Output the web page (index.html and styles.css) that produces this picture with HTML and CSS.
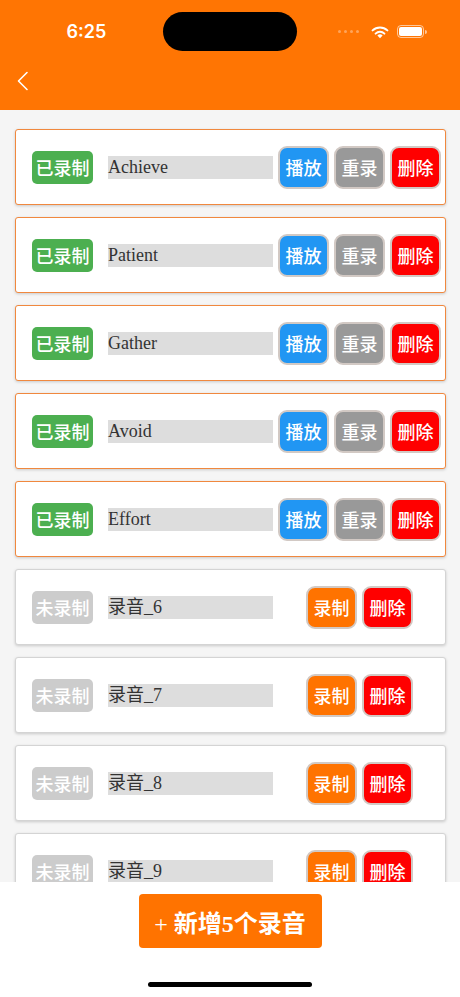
FILE: index.html
```html
<!DOCTYPE html>
<html lang="zh-CN">
<head>
    <meta charset="UTF-8">
    <meta name="viewport" content="width=device-width, initial-scale=1.0">
    <title>录音列表</title>
    <link rel="stylesheet" href="styles.css">
</head>
<body>
    <div class="page">
        <div class="topbar">
            <div class="status">
                <div class="time">6:25</div>
                <div class="island"></div>
                <div class="status-icons">
                    <span class="dots"><i></i><i></i><i></i><i></i></span>
                    <svg class="wifi" width="18" height="14" viewBox="0 0 18 14">
                        <path d="M9 13.2l2.6-2.7a3.8 3.8 0 0 0-5.2 0z" fill="#fff"/>
                        <path d="M4.6 8.6a6.3 6.3 0 0 1 8.8 0" stroke="#fff" stroke-width="2" fill="none" stroke-linecap="round"/>
                        <path d="M1.6 5.4a10.6 10.6 0 0 1 14.8 0" stroke="#fff" stroke-width="2" fill="none" stroke-linecap="round"/>
                    </svg>
                    <span class="battery"><span class="battery-fill"></span></span>
                </div>
            </div>
            <div class="nav">
                <svg class="back" width="14" height="20" viewBox="0 0 14 20">
                    <path d="M11 1.5L2.5 10L11 18.5" stroke="#fff" stroke-width="1.6" fill="none" stroke-linecap="round" stroke-linejoin="round"/>
                </svg>
            </div>
        </div>

        <div class="list">
            <div class="card done">
                <span class="tag done">已录制</span>
                <span class="name">Achieve</span>
                <div class="actions">
                    <button class="btn play">播放</button>
                    <button class="btn redo">重录</button>
                    <button class="btn del">删除</button>
                </div>
            </div>
            <div class="card done">
                <span class="tag done">已录制</span>
                <span class="name">Patient</span>
                <div class="actions">
                    <button class="btn play">播放</button>
                    <button class="btn redo">重录</button>
                    <button class="btn del">删除</button>
                </div>
            </div>
            <div class="card done">
                <span class="tag done">已录制</span>
                <span class="name">Gather</span>
                <div class="actions">
                    <button class="btn play">播放</button>
                    <button class="btn redo">重录</button>
                    <button class="btn del">删除</button>
                </div>
            </div>
            <div class="card done">
                <span class="tag done">已录制</span>
                <span class="name">Avoid</span>
                <div class="actions">
                    <button class="btn play">播放</button>
                    <button class="btn redo">重录</button>
                    <button class="btn del">删除</button>
                </div>
            </div>
            <div class="card done">
                <span class="tag done">已录制</span>
                <span class="name">Effort</span>
                <div class="actions">
                    <button class="btn play">播放</button>
                    <button class="btn redo">重录</button>
                    <button class="btn del">删除</button>
                </div>
            </div>
            <div class="card">
                <span class="tag">未录制</span>
                <span class="name">录音_6</span>
                <div class="actions">
                    <button class="btn rec">录制</button>
                    <button class="btn del">删除</button>
                </div>
            </div>
            <div class="card">
                <span class="tag">未录制</span>
                <span class="name">录音_7</span>
                <div class="actions">
                    <button class="btn rec">录制</button>
                    <button class="btn del">删除</button>
                </div>
            </div>
            <div class="card">
                <span class="tag">未录制</span>
                <span class="name">录音_8</span>
                <div class="actions">
                    <button class="btn rec">录制</button>
                    <button class="btn del">删除</button>
                </div>
            </div>
            <div class="card">
                <span class="tag">未录制</span>
                <span class="name">录音_9</span>
                <div class="actions">
                    <button class="btn rec">录制</button>
                    <button class="btn del">删除</button>
                </div>
            </div>
        </div>

        <div class="footer">
            <button class="add-btn"><span class="plus">+</span> 新增5个录音</button>
            <div class="home-bar"></div>
        </div>
    </div>
</body>
</html>
```

FILE: styles.css
```css
body {
    margin: 0;
    font-family: "Noto Sans CJK SC", "Noto Sans", sans-serif;
    background-color: #f5f5f5;
}
.page {
    width: 460px;
    height: 997px;
    display: flex;
    flex-direction: column;
    overflow: hidden;
}
.topbar {
    background-color: #ff7503;
    height: 110px;
    flex-shrink: 0;
}
.status {
    display: grid;
    grid-template-columns: 1fr 134px 1fr;
    padding-top: 12px;
    height: 39px;
}
.time {
    color: #fff;
    font-family: "Inter", "Liberation Sans", sans-serif;
    font-size: 18px;
    font-weight: 600;
    display: flex;
    align-items: center;
    justify-content: center;
    padding-left: 10px;
}
.island {
    background-color: #000;
    border-radius: 20px;
}
.status-icons {
    display: flex;
    align-items: center;
    justify-content: center;
    gap: 8px;
    padding-left: 4px;
}
.dots {
    display: flex;
    gap: 3px;
    margin-right: 4px;
}
.dots i {
    width: 3px;
    height: 3px;
    border-radius: 50%;
    background-color: rgba(255,255,255,0.35);
}
.battery {
    position: relative;
    width: 27px;
    height: 13px;
    border: 1px solid rgba(255,255,255,0.6);
    border-radius: 4px;
    padding: 1px;
    box-sizing: border-box;
    display: flex;
}
.battery::after {
    content: "";
    position: absolute;
    right: -4px;
    top: 4px;
    width: 2px;
    height: 4px;
    border-radius: 0 2px 2px 0;
    background-color: rgba(255,255,255,0.6);
}
.battery-fill {
    flex: 1;
    background-color: #fff;
    border-radius: 2px;
}
.nav {
    height: 59px;
    display: flex;
    align-items: center;
    padding-left: 16px;
}
.list {
    flex: 1;
    overflow: hidden;
    padding: 19px 14px 0 15px;
    display: flex;
    flex-direction: column;
    gap: 12px;
}
.card {
    height: 76px;
    flex-shrink: 0;
    box-sizing: border-box;
    background-color: #fff;
    border: 1px solid #d4d4d4;
    border-radius: 3px;
    box-shadow: 0 1px 3px rgba(0,0,0,0.18);
    display: flex;
    align-items: center;
    padding-left: 16px;
}
.card.done {
    border-color: #f0883e;
}
.tag {
    width: 61px;
    height: 33px;
    border-radius: 5px;
    background-color: #cccccc;
    color: #fff;
    font-size: 18px;
    font-weight: 500;
    display: flex;
    align-items: center;
    justify-content: center;
    flex-shrink: 0;
}
.tag.done {
    background-color: #4caf50;
}
.name {
    width: 165px;
    height: 23px;
    margin-left: 15px;
    background-color: #dddddd;
    color: #333;
    font-family: "Liberation Serif", "Noto Sans CJK SC", serif;
    font-size: 18px;
    line-height: 23px;
    flex-shrink: 0;
    white-space: nowrap;
}
.actions {
    width: 163px;
    margin-left: 5px;
    display: flex;
    justify-content: center;
    gap: 5px;
}
.btn {
    width: 51px;
    height: 43px;
    padding: 0;
    border: 2px solid #d2c9c4;
    border-radius: 9px;
    color: #fff;
    font-family: "Noto Sans CJK SC", sans-serif;
    font-size: 18px;
    font-weight: 500;
}
.play {
    background-color: #2196f3;
}
.redo {
    background-color: #999999;
}
.del {
    background-color: #ff0000;
}
.rec {
    background-color: #ff7300;
}
.footer {
    height: 115px;
    flex-shrink: 0;
    background-color: #fff;
    display: flex;
    flex-direction: column;
    align-items: center;
    padding-top: 12px;
    box-sizing: border-box;
}
.add-btn {
    width: 183px;
    height: 54px;
    padding: 0;
    border: none;
    border-radius: 4px;
    background-color: #ff7300;
    color: #fff;
    font-family: "Liberation Serif", "Noto Sans CJK SC", serif;
    font-size: 24px;
    font-weight: bold;
}
.plus {
    font-weight: normal;
}
.home-bar {
    width: 164px;
    height: 5px;
    border-radius: 3px;
    background-color: #000;
    margin-top: 34px;
}
```
